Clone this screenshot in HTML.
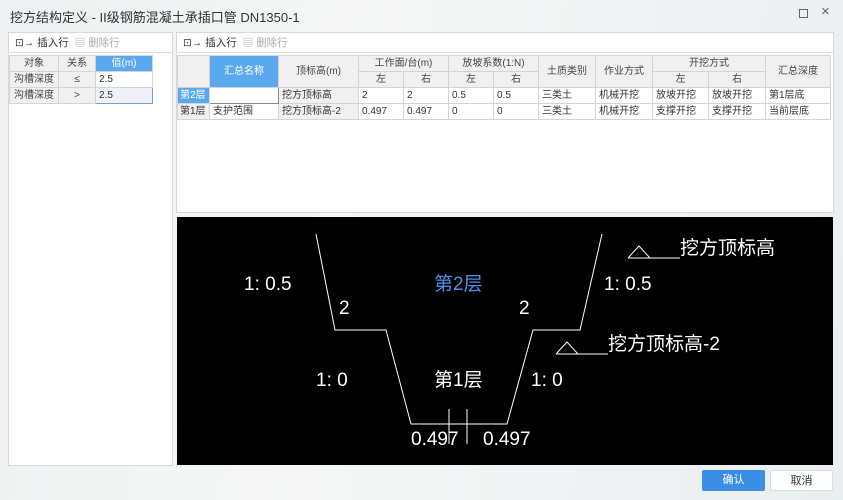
<!DOCTYPE html>
<html><head><meta charset="utf-8"><style>
*{margin:0;padding:0;box-sizing:border-box}
body{width:843px;height:500px;overflow:hidden;background:linear-gradient(100deg,#eef0f1 0%,#f6f7f7 40%,#e9eef0 100%);font-family:"Liberation Sans","Noto Sans CJK SC",sans-serif;font-size:11px;color:#333;position:relative}
.a{position:absolute}
.title{left:10px;top:7px;font-size:13px;color:#333}
.panel{background:#fff;border:1px solid #d8d8d8}
.tb{height:20px;border-bottom:1px solid #ddd;background:#fff;display:flex;align-items:center;padding-left:6px;gap:6px;font-size:10.5px}
.tb .dis{color:#aaa}
table{border-collapse:collapse;position:absolute;font-size:10px;line-height:14px}
td{border:1px solid #d4d4d4;height:16px;padding:0 3px;white-space:nowrap;vertical-align:middle}
.h{background:#f0f0f0;text-align:center;color:#444}
.sel{background:#5aa9ee;color:#fff;text-align:center}
svg text{font-family:"Liberation Sans","Noto Sans CJK SC",sans-serif;fill:#fff;font-size:19px}
.btn{top:470px;height:21px;width:63px;font-size:11px;text-align:center;line-height:21px;border-radius:2px}
</style></head><body>
<div class="a title">挖方结构定义 - II级钢筋混凝土承插口管 DN1350-1</div>
<div class="a" style="left:799px;top:9px;width:9px;height:9px;border:1px solid #666"></div>
<div class="a" style="left:821px;top:3px;font-size:15px;color:#666">×</div>

<div class="a panel" style="left:8px;top:32px;width:165px;height:434px">
 <div class="tb"><span>⊡→ 插入行</span><span class="dis">▤ 删除行</span></div>
</div>
<table style="left:9px;top:55px">
<tr><td class="h" style="width:49px">对象</td><td class="h" style="width:37px">关系</td><td class="sel" style="width:57px">值(m)</td></tr>
<tr><td class="h">沟槽深度</td><td class="h">≤</td><td style="background:#fff">2.5</td></tr>
<tr><td class="h">沟槽深度</td><td class="h">&gt;</td><td style="background:#eef2f8;border:1px solid #7a9cc8">2.5</td></tr>
</table>

<div class="a panel" style="left:176px;top:32px;width:658px;height:181px">
 <div class="tb"><span>⊡→ 插入行</span><span class="dis">▤ 删除行</span></div>
</div>
<table style="left:177px;top:55px">
<tr><td class="h" rowspan="2" style="width:32px"></td><td class="sel" rowspan="2" style="width:69px">汇总名称</td><td class="h" rowspan="2" style="width:80px">顶标高(m)</td><td class="h" colspan="2">工作面/台(m)</td><td class="h" colspan="2">放坡系数(1:N)</td><td class="h" rowspan="2" style="width:57px">土质类别</td><td class="h" rowspan="2" style="width:57px">作业方式</td><td class="h" colspan="2">开挖方式</td><td class="h" rowspan="2" style="width:65px">汇总深度</td></tr>
<tr><td class="h" style="width:45px">左</td><td class="h" style="width:45px">右</td><td class="h" style="width:45px">左</td><td class="h" style="width:45px">右</td><td class="h" style="width:56px">左</td><td class="h" style="width:57px">右</td></tr>
<tr><td style="background:#5aa9ee;color:#fff;padding:0 2px">第2层</td><td style="border:1px solid #888;background:#fff"></td><td style="background:#f0f0f0">挖方顶标高</td><td>2</td><td>2</td><td>0.5</td><td>0.5</td><td>三类土</td><td>机械开挖</td><td>放坡开挖</td><td>放坡开挖</td><td>第1层底</td></tr>
<tr><td style="background:#f0f0f0;padding:0 2px">第1层</td><td>支护范围</td><td style="background:#f0f0f0">挖方顶标高-2</td><td>0.497</td><td>0.497</td><td>0</td><td>0</td><td>三类土</td><td>机械开挖</td><td>支撑开挖</td><td>支撑开挖</td><td>当前层底</td></tr>
</table>

<svg class="a" style="left:177px;top:217px" width="656" height="248" viewBox="177 217 656 248">
<rect x="177" y="217" width="656" height="248" fill="#000"/>
<g stroke="#fff" stroke-width="1" fill="none">
<polyline points="316,234 335,330 386,330 411,424 507,424 533,330 580,330 602,234"/>
<line x1="449" y1="409" x2="449" y2="444"/><line x1="467" y1="409" x2="467" y2="444"/>
<polyline points="628,258 639,246 650,258 680,258"/><line x1="628" y1="258" x2="650" y2="258"/>
<polyline points="556,354 567,342 578,354 608,354"/><line x1="556" y1="354" x2="578" y2="354"/>
</g>
<text x="244" y="290">1: 0.5</text>
<text x="434" y="290" style="fill:#4d8ee8">第2层</text>
<text x="339" y="314">2</text><text x="519" y="314">2</text>
<text x="604" y="290">1: 0.5</text>
<text x="680" y="254">挖方顶标高</text>
<text x="608" y="350">挖方顶标高-2</text>
<text x="316" y="386">1: 0</text>
<text x="434" y="386">第1层</text>
<text x="531" y="386">1: 0</text>
<text x="411" y="445">0.497</text>
<text x="483" y="445">0.497</text>
</svg>

<div class="a btn" style="left:702px;background:#3a8ee6;color:#fff">确认</div>
<div class="a btn" style="left:770px;background:#fff;border:1px solid #ddd;color:#333">取消</div>
</body></html>
